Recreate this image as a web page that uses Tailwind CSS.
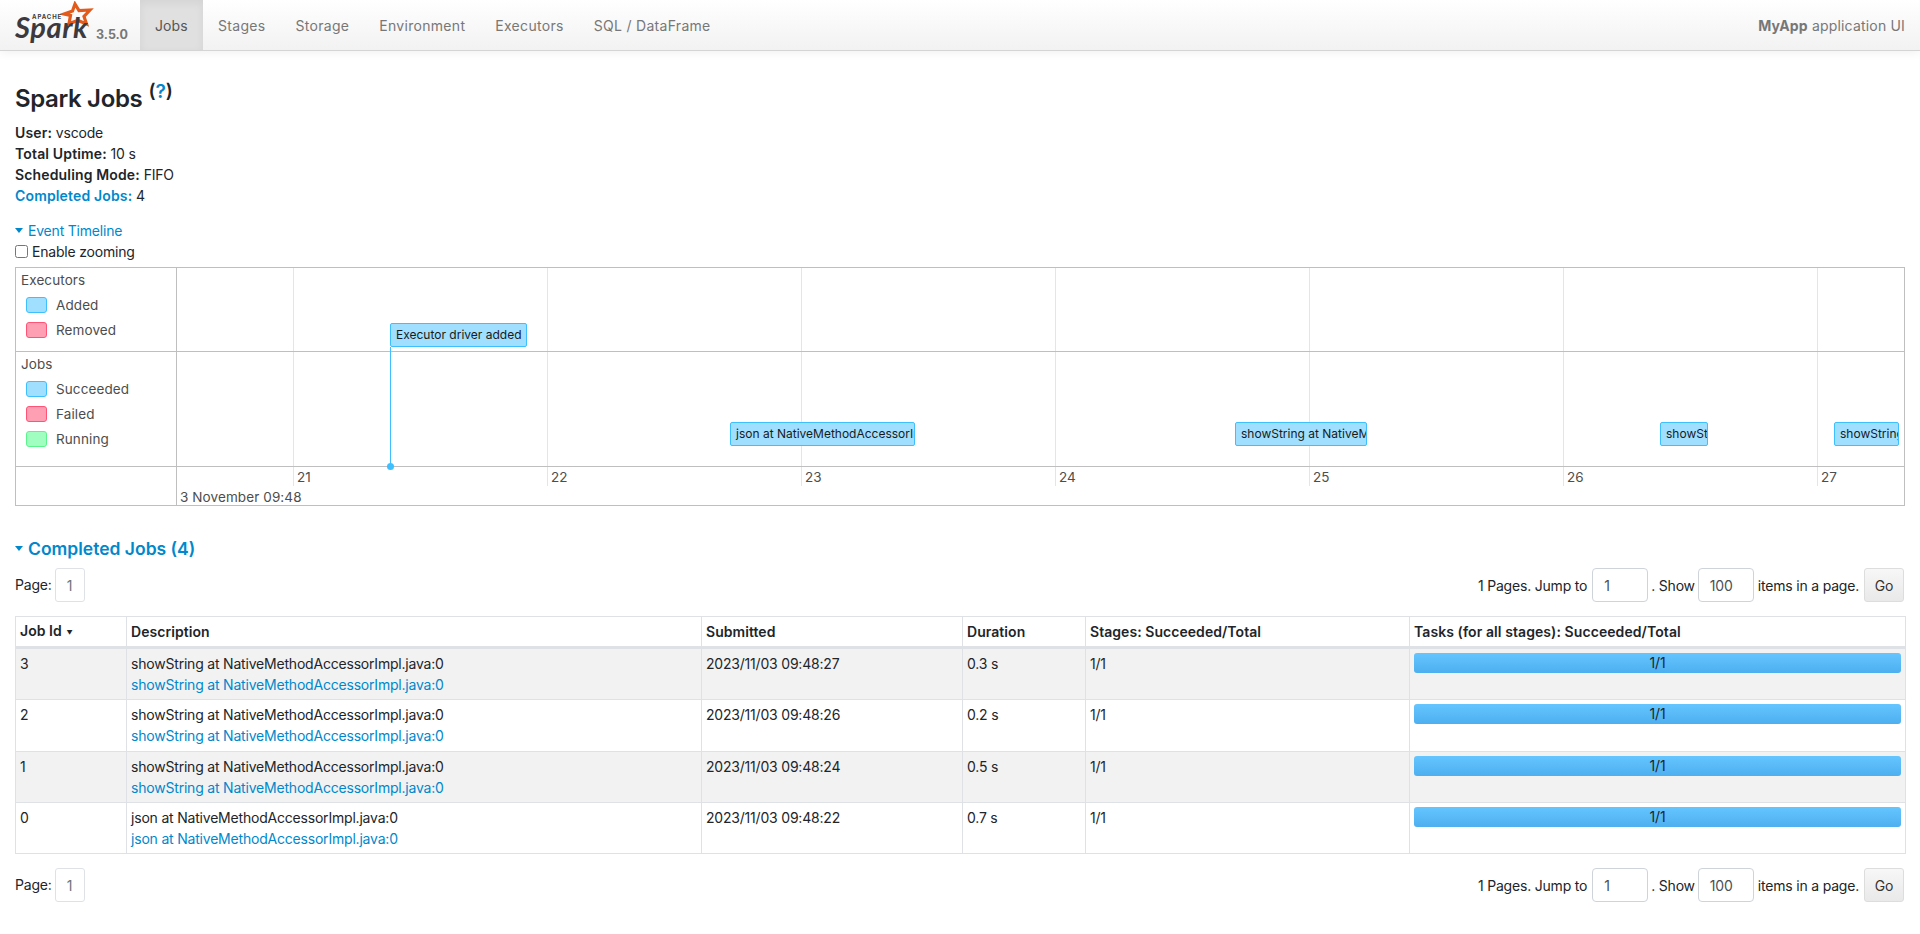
<!DOCTYPE html>
<html><head><meta charset="utf-8"><title>Spark Jobs</title>
<script src="https://cdn.jsdelivr.net/npm/@tailwindcss/browser@4"></script></head>
<body class="bg-white text-[#212529] text-[14px] leading-[21px] tracking-[-0.2px] font-['Inter','Liberation_Sans',sans-serif]">
<nav class="flex h-[51px] items-stretch border-b border-[#d4d4d4] bg-gradient-to-b from-white to-[#f2f2f2] shadow-[0_1px_10px_rgba(0,0,0,0.07)]">
  <a class="relative block w-[140px] shrink-0">
    <svg class="absolute left-[60px] top-[1px]" width="34" height="28" viewBox="0 0 34 28"><path d="M15 3 L19 9.5 L30 9 L24 15.5 L26.5 23 L18 19.5 L9 22.5 L10.5 14.5 L4 13 L12.5 10 Z" fill="none" stroke="#e25a1c" stroke-width="3.2" stroke-linejoin="miter"/></svg>
    <span class="absolute left-[32px] top-[14px] text-[6px] leading-[6px] font-bold tracking-[0.9px] text-[#3c3a3e]">APACHE</span>
    <span class="absolute left-[15px] top-[20px] text-[29px] leading-[14px] font-bold italic tracking-[0.6px] text-[#3c3a3e] font-['Lato',sans-serif]">Spark</span>
    <span class="absolute left-[96px] top-[24px] text-[12.5px] leading-[21px] font-bold tracking-normal text-[#777]">3.5.0</span>
  </a>
  <a class="flex items-center px-[15px] w-[63px] bg-[#e0e0e0] shadow-[inset_0_3px_8px_rgba(0,0,0,0.06)] text-[#555] tracking-[0.1px]">Jobs</a>
  <div class="flex items-center text-[#777] tracking-[0.3px]">
    <a class="ml-[15px]">Stages</a><a class="ml-[30px]">Storage</a><a class="ml-[30px]">Environment</a><a class="ml-[30px]">Executors</a><a class="ml-[30px]">SQL / DataFrame</a>
  </div>
  <div class="ml-auto mr-[15px] flex items-center text-[#777] tracking-[0.18px]"><strong class="font-bold">MyApp</strong>&nbsp;application UI</div>
</nav>

<main class="px-[15px]">
  <h3 class="mt-[32px] flex items-start text-[24px] leading-[32px] font-semibold tracking-[-0.35px]">Spark Jobs<sup class="ml-[6px] mt-[8px] text-[19px] leading-[20px] font-semibold tracking-normal">(<a class="text-[#0088cc]">?</a>)</sup></h3>
  <ul class="mt-[7px]">
    <li><strong class="font-semibold tracking-[0.15px]">User:</strong> vscode</li>
    <li><strong class="font-semibold tracking-[0.15px]">Total Uptime:</strong> 10 s</li>
    <li><strong class="font-semibold tracking-[0.15px]">Scheduling Mode:</strong> FIFO</li>
    <li><a class="font-semibold tracking-[0.15px] text-[#0088cc]">Completed Jobs:</a> 4</li>
  </ul>
  <div class="mt-[14px] flex items-center text-[#0088cc]"><span class="mr-[4px] h-0 w-0 border-x-[4.5px] border-t-[5px] border-x-transparent border-t-[#0088cc]"></span><span class="ml-[1px]">Event Timeline</span></div>
  <label class="flex items-center"><input type="checkbox" class="m-0 mr-[4px] h-[13px] w-[13px] appearance-none rounded-[2.5px] border border-[#767676] bg-white"><span>Enable zooming</span></label>

  <section class="mt-[5px] h-[239px] w-[1890px] border border-[#bfbfbf] text-[13.5px] leading-[18px] tracking-[0.1px] text-[#4d4d4d] relative overflow-hidden">
    <div class="flex h-[84px] border-b border-[#bfbfbf]">
      <div class="w-[161px] shrink-0 border-r border-[#bfbfbf] pl-[5px] pt-[3px]">
        <div>Executors</div>
        <div class="mt-[7px] flex h-[18px] items-center"><span class="ml-[5px] mr-[9px] h-[16px] w-[21px] rounded-[3px] border border-[#3EC0FF] bg-[#A0DFFF]"></span>Added</div>
        <div class="mt-[7px] flex h-[18px] items-center"><span class="ml-[5px] mr-[9px] h-[16px] w-[21px] rounded-[3px] border border-[#FF5475] bg-[#FF9FB3]"></span>Removed</div>
      </div>
    </div>
    <div class="flex h-[115px] border-b border-[#bfbfbf]">
      <div class="w-[161px] shrink-0 border-r border-[#bfbfbf] pl-[5px] pt-[3px]">
        <div>Jobs</div>
        <div class="mt-[7px] flex h-[18px] items-center"><span class="ml-[5px] mr-[9px] h-[16px] w-[21px] rounded-[3px] border border-[#3EC0FF] bg-[#A0DFFF]"></span>Succeeded</div>
        <div class="mt-[7px] flex h-[18px] items-center"><span class="ml-[5px] mr-[9px] h-[16px] w-[21px] rounded-[3px] border border-[#FF5475] bg-[#FF9FB3]"></span>Failed</div>
        <div class="mt-[7px] flex h-[18px] items-center"><span class="ml-[5px] mr-[9px] h-[16px] w-[21px] rounded-[3px] border border-[#5DF38D] bg-[#A0FFC0]"></span>Running</div>
      </div>
    </div>
    <div class="h-[38px] w-[161px] border-r border-[#bfbfbf]"></div>

    <!-- Time axis grid: items positioned on the timeline canvas -->
    <span class="absolute left-[277px] top-0 h-[218px] w-px bg-[#e5e5e5]"></span>
    <span class="absolute left-[531px] top-0 h-[218px] w-px bg-[#e5e5e5]"></span>
    <span class="absolute left-[785px] top-0 h-[218px] w-px bg-[#e5e5e5]"></span>
    <span class="absolute left-[1039px] top-0 h-[218px] w-px bg-[#e5e5e5]"></span>
    <span class="absolute left-[1293px] top-0 h-[218px] w-px bg-[#e5e5e5]"></span>
    <span class="absolute left-[1547px] top-0 h-[218px] w-px bg-[#e5e5e5]"></span>
    <span class="absolute left-[1801px] top-0 h-[218px] w-px bg-[#e5e5e5]"></span>
    <span class="absolute left-[162px] top-[83px] h-px w-[1728px] bg-[#bfbfbf]"></span>
    <span class="absolute left-[162px] top-[198px] h-px w-[1728px] bg-[#bfbfbf]"></span>
    <span class="absolute left-[281px] top-[200px]">21</span>
    <span class="absolute left-[535px] top-[200px]">22</span>
    <span class="absolute left-[789px] top-[200px]">23</span>
    <span class="absolute left-[1043px] top-[200px]">24</span>
    <span class="absolute left-[1297px] top-[200px]">25</span>
    <span class="absolute left-[1551px] top-[200px]">26</span>
    <span class="absolute left-[1805px] top-[200px]">27</span>
    <span class="absolute left-[164px] top-[220px]">3 November 09:48</span>

    <span class="absolute left-[374px] top-[79px] h-[120px] w-px bg-[#3EC0FF]"></span>
    <span class="absolute left-[371px] top-[195px] h-[7px] w-[7px] rounded-full bg-[#3EC0FF]"></span>
    <div class="absolute left-[374px] top-[55px] flex h-[24px] w-[137px] items-center overflow-hidden whitespace-nowrap rounded-[2px] border border-[#3EC0FF] bg-[#A0DFFF] pl-[5px] text-[12px] tracking-normal text-[#1a1a1a]">Executor driver added</div>
    <div class="absolute left-[714px] top-[154px] flex h-[24px] w-[185px] items-center overflow-hidden whitespace-nowrap rounded-[2px] border border-[#3EC0FF] bg-[#A0DFFF] pl-[5px] text-[12px] tracking-normal text-[#1a1a1a]">json at NativeMethodAccessorImpl.java:0</div>
    <div class="absolute left-[1219px] top-[154px] flex h-[24px] w-[132px] items-center overflow-hidden whitespace-nowrap rounded-[2px] border border-[#3EC0FF] bg-[#A0DFFF] pl-[5px] text-[12px] tracking-normal text-[#1a1a1a]">showString at NativeMethodAccessorImpl.java:0</div>
    <div class="absolute left-[1644px] top-[154px] flex h-[24px] w-[48px] items-center overflow-hidden whitespace-nowrap rounded-[2px] border border-[#3EC0FF] bg-[#A0DFFF] pl-[5px] text-[12px] tracking-normal text-[#1a1a1a]">showString at NativeMethodAccessorImpl.java:0</div>
    <div class="absolute left-[1818px] top-[154px] flex h-[24px] w-[65px] items-center overflow-hidden whitespace-nowrap rounded-[2px] border border-[#3EC0FF] bg-[#A0DFFF] pl-[5px] text-[12px] tracking-normal text-[#1a1a1a]">showString at NativeMethodAccessorImpl.java:0</div>
  </section>

  <h4 class="mt-[32px] flex h-[21px] items-center text-[17.5px] font-semibold tracking-normal text-[#0088cc]"><span class="mr-[5px] h-0 w-0 border-x-[4.5px] border-t-[5px] border-x-transparent border-t-[#0088cc]"></span>Completed Jobs (4)</h4>

  <div class="mt-[9px] flex h-[34px] items-center justify-between">
    <div class="flex items-center"><span class="-mt-[2px]">Page:</span><span class="ml-[3px] flex h-[34px] w-[30px] items-center justify-center rounded-[3px] border border-[#dee2e6] text-[#6c757d]">1</span></div>
    <div class="flex items-center"><span>1 Pages. Jump to</span><span class="ml-[5px] flex h-[34px] w-[56px] items-center rounded-[4px] border border-[#ced4da] pl-[11px] text-[#495057]">1</span><span class="ml-[3px]">. Show</span><span class="ml-[3px] flex h-[34px] w-[56px] items-center rounded-[4px] border border-[#ced4da] pl-[11px] text-[#495057]">100</span><span class="ml-[4px]">items in a page.</span><button class="ml-[5px] mr-px h-[34px] w-[40px] rounded-[3px] border border-[#ddd] bg-gradient-to-b from-[#f7f7f7] to-[#e9e9e9] text-[#333]">Go</button></div>
  </div>

  <table class="mt-[14px] w-[1890px] table-fixed border-collapse">
    <colgroup><col class="w-[111px]"><col class="w-[575px]"><col class="w-[261px]"><col class="w-[123px]"><col class="w-[324px]"><col class="w-[496px]"></colgroup>
    <thead>
      <tr class="h-[31px] text-left font-semibold">
        <th class="border border-b-[3px] border-[#dee2e6] px-[4px] font-semibold tracking-[0.05px]">Job Id <span class="ml-[1px] text-[6px] align-[1px]">▼</span></th>
        <th class="border border-b-[3px] border-[#dee2e6] px-[4px] font-semibold tracking-[0.05px]">Description</th>
        <th class="border border-b-[3px] border-[#dee2e6] px-[4px] font-semibold tracking-[0.05px]">Submitted</th>
        <th class="border border-b-[3px] border-[#dee2e6] px-[4px] font-semibold tracking-[0.05px]">Duration</th>
        <th class="border border-b-[3px] border-[#dee2e6] px-[4px] font-semibold tracking-[0.05px]">Stages: Succeeded/Total</th>
        <th class="border border-b-[3px] border-[#dee2e6] px-[4px] font-semibold tracking-[0.08px]">Tasks (for all stages): Succeeded/Total</th>
      </tr>
    </thead>
    <tbody>
      <tr class="h-[51.5px] bg-[#f2f2f2] align-top">
        <td class="border border-[#dee2e6] p-[4px]">3</td>
        <td class="border border-[#dee2e6] p-[4px]"><div>showString at NativeMethodAccessorImpl.java:0</div><a class="block text-[#0088cc]">showString at NativeMethodAccessorImpl.java:0</a></td>
        <td class="border border-[#dee2e6] p-[4px]">2023/11/03 09:48:27</td>
        <td class="border border-[#dee2e6] p-[4px]">0.3 s</td>
        <td class="border border-[#dee2e6] p-[4px]">1/1</td>
        <td class="border border-[#dee2e6] p-[4px]"><div class="h-[20px] rounded-[3px] bg-gradient-to-b from-[#64c5ff] to-[#4dafef] text-center leading-[20px]">1/1</div></td>
      </tr>
      <tr class="h-[51.5px] align-top">
        <td class="border border-[#dee2e6] p-[4px]">2</td>
        <td class="border border-[#dee2e6] p-[4px]"><div>showString at NativeMethodAccessorImpl.java:0</div><a class="block text-[#0088cc]">showString at NativeMethodAccessorImpl.java:0</a></td>
        <td class="border border-[#dee2e6] p-[4px]">2023/11/03 09:48:26</td>
        <td class="border border-[#dee2e6] p-[4px]">0.2 s</td>
        <td class="border border-[#dee2e6] p-[4px]">1/1</td>
        <td class="border border-[#dee2e6] p-[4px]"><div class="h-[20px] rounded-[3px] bg-gradient-to-b from-[#64c5ff] to-[#4dafef] text-center leading-[20px]">1/1</div></td>
      </tr>
      <tr class="h-[51.5px] bg-[#f2f2f2] align-top">
        <td class="border border-[#dee2e6] p-[4px]">1</td>
        <td class="border border-[#dee2e6] p-[4px]"><div>showString at NativeMethodAccessorImpl.java:0</div><a class="block text-[#0088cc]">showString at NativeMethodAccessorImpl.java:0</a></td>
        <td class="border border-[#dee2e6] p-[4px]">2023/11/03 09:48:24</td>
        <td class="border border-[#dee2e6] p-[4px]">0.5 s</td>
        <td class="border border-[#dee2e6] p-[4px]">1/1</td>
        <td class="border border-[#dee2e6] p-[4px]"><div class="h-[20px] rounded-[3px] bg-gradient-to-b from-[#64c5ff] to-[#4dafef] text-center leading-[20px]">1/1</div></td>
      </tr>
      <tr class="h-[50.5px] align-top">
        <td class="border border-[#dee2e6] p-[4px]">0</td>
        <td class="border border-[#dee2e6] p-[4px]"><div>json at NativeMethodAccessorImpl.java:0</div><a class="block text-[#0088cc]">json at NativeMethodAccessorImpl.java:0</a></td>
        <td class="border border-[#dee2e6] p-[4px]">2023/11/03 09:48:22</td>
        <td class="border border-[#dee2e6] p-[4px]">0.7 s</td>
        <td class="border border-[#dee2e6] p-[4px]">1/1</td>
        <td class="border border-[#dee2e6] p-[4px]"><div class="h-[20px] rounded-[3px] bg-gradient-to-b from-[#64c5ff] to-[#4dafef] text-center leading-[20px]">1/1</div></td>
      </tr>
    </tbody>
  </table>

  <div class="mt-[14px] flex h-[34px] items-center justify-between">
    <div class="flex items-center"><span class="-mt-[2px]">Page:</span><span class="ml-[3px] flex h-[34px] w-[30px] items-center justify-center rounded-[3px] border border-[#dee2e6] text-[#6c757d]">1</span></div>
    <div class="flex items-center"><span>1 Pages. Jump to</span><span class="ml-[5px] flex h-[34px] w-[56px] items-center rounded-[4px] border border-[#ced4da] pl-[11px] text-[#495057]">1</span><span class="ml-[3px]">. Show</span><span class="ml-[3px] flex h-[34px] w-[56px] items-center rounded-[4px] border border-[#ced4da] pl-[11px] text-[#495057]">100</span><span class="ml-[4px]">items in a page.</span><button class="ml-[5px] mr-px h-[34px] w-[40px] rounded-[3px] border border-[#ddd] bg-gradient-to-b from-[#f7f7f7] to-[#e9e9e9] text-[#333]">Go</button></div>
  </div>
</main>
</body></html>
